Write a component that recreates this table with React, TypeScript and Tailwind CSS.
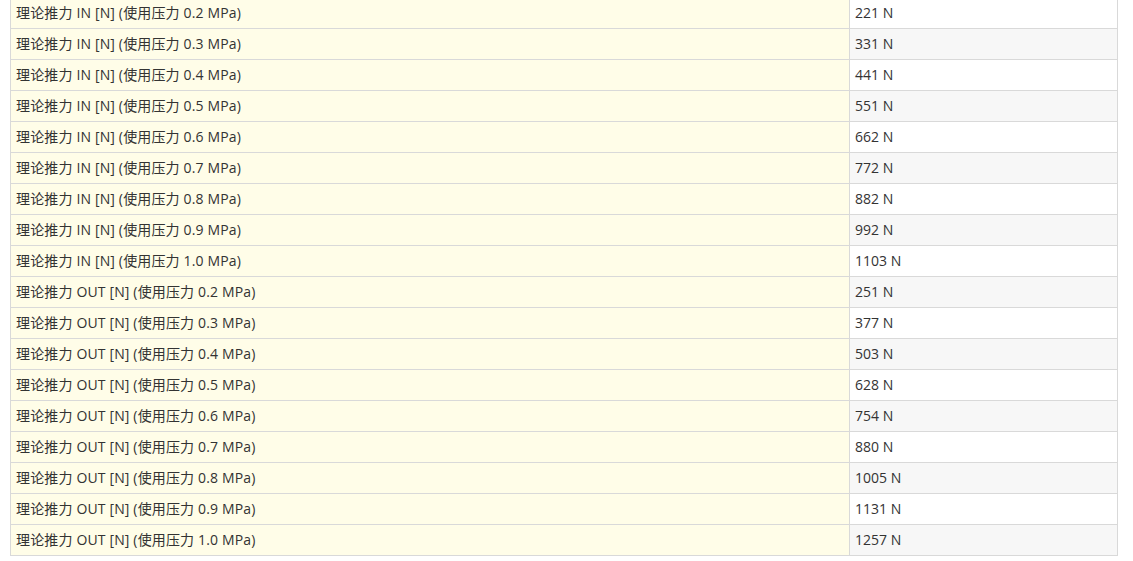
const rows: [string, string][] = [
  ['理论推力 IN [N] (使用压力 0.2 MPa)', '221 N'],
  ['理论推力 IN [N] (使用压力 0.3 MPa)', '331 N'],
  ['理论推力 IN [N] (使用压力 0.4 MPa)', '441 N'],
  ['理论推力 IN [N] (使用压力 0.5 MPa)', '551 N'],
  ['理论推力 IN [N] (使用压力 0.6 MPa)', '662 N'],
  ['理论推力 IN [N] (使用压力 0.7 MPa)', '772 N'],
  ['理论推力 IN [N] (使用压力 0.8 MPa)', '882 N'],
  ['理论推力 IN [N] (使用压力 0.9 MPa)', '992 N'],
  ['理论推力 IN [N] (使用压力 1.0 MPa)', '1103 N'],
  ['理论推力 OUT [N] (使用压力 0.2 MPa)', '251 N'],
  ['理论推力 OUT [N] (使用压力 0.3 MPa)', '377 N'],
  ['理论推力 OUT [N] (使用压力 0.4 MPa)', '503 N'],
  ['理论推力 OUT [N] (使用压力 0.5 MPa)', '628 N'],
  ['理论推力 OUT [N] (使用压力 0.6 MPa)', '754 N'],
  ['理论推力 OUT [N] (使用压力 0.7 MPa)', '880 N'],
  ['理论推力 OUT [N] (使用压力 0.8 MPa)', '1005 N'],
  ['理论推力 OUT [N] (使用压力 0.9 MPa)', '1131 N'],
  ['理论推力 OUT [N] (使用压力 1.0 MPa)', '1257 N'],
];

export default function App() {
  return (
    <div className="min-h-screen bg-white pl-[10px] pr-[15px] overflow-hidden">
      <table
        className="w-[1108px] -mt-[3px] border-collapse text-[14px] text-[#333]"
        style={{ fontFamily: '"Open Sans", "Noto Sans CJK SC", sans-serif' }}
      >
        <tbody>
          {rows.map(([label, value], i) => (
            <tr key={label} className="h-[31px]">
              <td className="w-[839px] border border-[#d9d9d9] bg-[#fffde8] px-[5px] py-0 leading-none tracking-[0.15px]">
                {label}
              </td>
              <td
                className={`border border-[#d9d9d9] px-[5px] py-0 leading-none ${
                  i % 2 === 0 ? 'bg-white' : 'bg-[#f7f7f7]'
                }`}
              >
                {value}
              </td>
            </tr>
          ))}
        </tbody>
      </table>
    </div>
  );
}
